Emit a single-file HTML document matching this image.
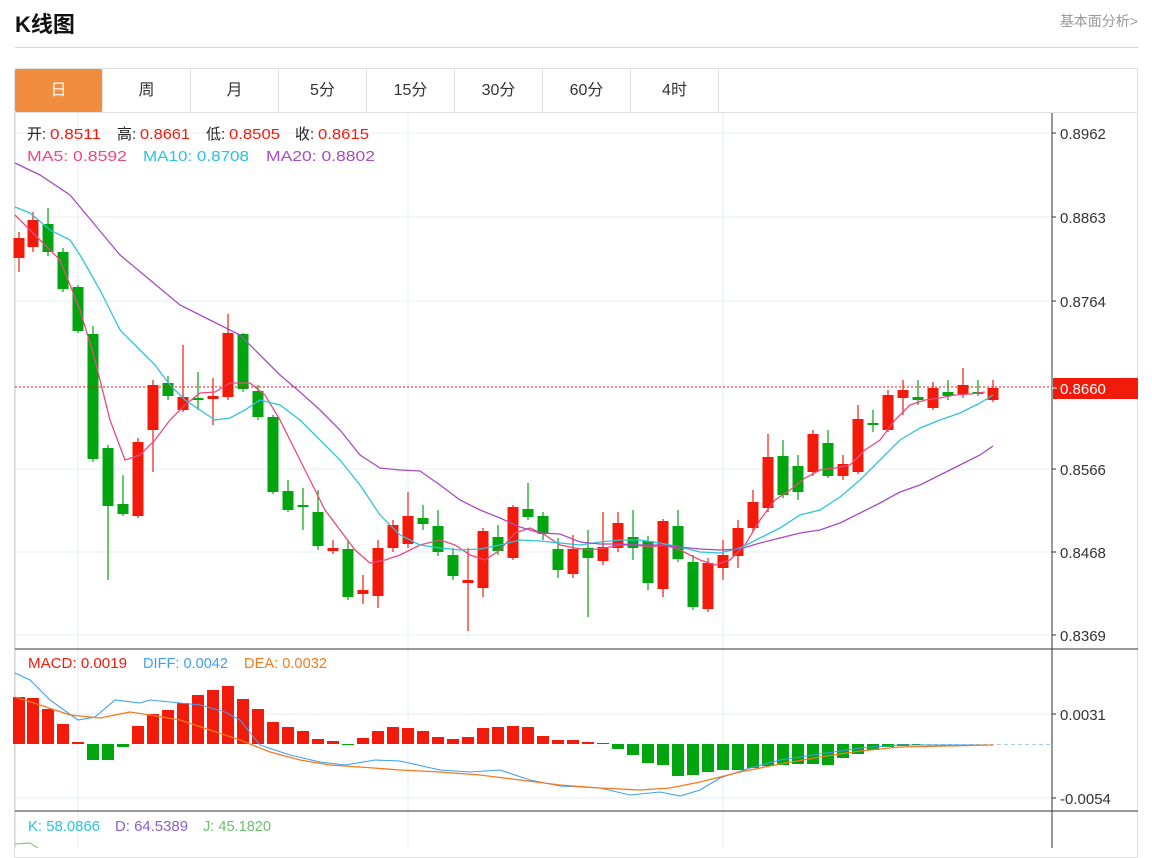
<!DOCTYPE html>
<html><head><meta charset="utf-8"><style>
body{margin:0;background:#fff;width:1152px;height:848px;overflow:hidden;font-family:"Liberation Sans","Noto Sans CJK SC",sans-serif;position:relative}
.t{position:absolute;left:15px;top:7px;font-size:22px;font-weight:bold;color:#111}
.lk{position:absolute;right:14px;top:11px;font-size:14px;color:#999}
.hr{position:absolute;left:15px;right:14px;top:47px;height:1px;background:#d5d5d5}
.frame{position:absolute;left:14px;top:68px;width:1124px;height:790px;border:1px solid #e0e0e0;box-sizing:border-box}
.tabs{position:absolute;left:15px;top:69px;height:43px;display:flex}
.tabs div{width:87px;height:43px;border-right:1px solid #e0e0e0;text-align:center;line-height:43px;font-size:16px;color:#333}
.tabs .a{background:#f28c3e;color:#fff;border-radius:2px}
.tb{position:absolute;left:15px;top:112px;width:1123px;height:1px;background:#e0e0e0}
svg{position:absolute;left:0;top:0}
</style></head><body>
<div class="t">K线图</div><div class="lk">基本面分析&gt;</div><div class="hr"></div>
<div class="frame"></div>
<div class="tabs"><div class="a">日</div><div>周</div><div>月</div><div>5分</div><div>15分</div><div>30分</div><div>60分</div><div>4时</div></div>
<div class="tb"></div>
<svg id="s" width="1152" height="848" xmlns="http://www.w3.org/2000/svg" font-family="Liberation Sans, Noto Sans CJK SC, sans-serif"></svg>
<script>
var s='';
function L(x1,y1,x2,y2,c,w,d){s+='<line x1="'+x1+'" y1="'+y1+'" x2="'+x2+'" y2="'+y2+'" stroke="'+c+'" stroke-width="'+(w||1)+'"'+(d?' stroke-dasharray="'+d+'"':'')+'/>';}
function T(x,y,t,c,sz,tl){s+='<text x="'+x+'" y="'+y+'" fill="'+c+'" font-size="'+(sz||14)+'"'+(tl?' textLength="'+tl+'" lengthAdjust="spacingAndGlyphs"':'')+'>'+t+'</text>';}
[133,217,301,385,469,552,635,714,798].forEach(function(y){L(15,y,1052,y,'#e6eef5');});
[78,408,723].forEach(function(x){L(x,113,x,848,'#e6eef5');});
L(15,113,15,848,'#ccc');L(1052,113,1052,848,'#333');
L(15,649,1138,649,'#333');L(15,811,1138,811,'#333');
var ax=[[133,'0.8962'],[217,'0.8863'],[301,'0.8764'],[469,'0.8566'],[552,'0.8468'],[635,'0.8369'],[714,'0.0031'],[798,'-0.0054']];
ax.forEach(function(a){L(1052,a[0],1056,a[0],'#333');T(1060,a[0]+6,a[1],'#333',15);});
var C=[[19,238,258,232,272,'r'],[33,220,247,212,252,'r'],[48,224,252,208,256,'g'],[63,252,289,248,292,'g'],[78,287,331,285,333,'g'],[93,334,459,326,462,'g'],[108,448,506,445,580,'g'],[123,504,514,475,516,'g'],[138,442,516,438,518,'r'],[153,385,430,380,472,'r'],[168,383,396,376,400,'g'],[183,397,410,345,412,'r'],[198,398,400,372,410,'g'],[213,396,399,378,425,'r'],[228,333,397,314,400,'r'],[243,334,389,333,392,'g'],[258,391,417,385,420,'g'],[273,417,492,415,494,'g'],[288,491,510,480,512,'g'],[303,505,507,488,530,'g'],[318,512,546,490,550,'g'],[333,548,551,540,554,'r'],[348,549,597,540,600,'g'],[363,590,594,575,604,'r'],[378,548,596,540,608,'r'],[393,525,548,520,552,'r'],[408,516,544,492,548,'r'],[423,518,524,505,530,'g'],[438,526,552,510,556,'g'],[453,555,576,548,580,'g'],[468,580,583,548,631,'r'],[483,531,588,528,597,'r'],[498,537,551,525,555,'g'],[513,507,558,505,560,'r'],[528,509,517,483,520,'g'],[543,516,534,512,540,'g'],[558,549,570,538,578,'g'],[573,549,574,535,578,'r'],[588,548,558,530,617,'g'],[603,547,561,512,565,'r'],[618,523,548,512,552,'r'],[633,537,548,510,560,'g'],[648,541,583,536,590,'g'],[663,521,589,519,597,'r'],[678,526,559,510,562,'g'],[693,562,607,555,610,'g'],[708,563,609,558,612,'r'],[723,555,568,540,580,'r'],[738,528,556,520,568,'r'],[753,502,528,490,532,'r'],[768,457,508,434,512,'r'],[783,456,495,440,498,'g'],[798,466,492,455,500,'g'],[813,434,472,430,476,'r'],[828,443,476,430,478,'g'],[843,464,476,455,480,'r'],[858,419,472,405,474,'r'],[873,423,425,410,432,'g'],[888,395,430,390,432,'r'],[903,390,398,380,415,'r'],[918,397,400,380,405,'g'],[933,388,408,382,410,'r'],[948,392,396,380,400,'g'],[963,385,394,368,398,'r'],[978,392,394,380,396,'g'],[993,388,400,380,402,'r']];
C.forEach(function(c){var col=c[5]=='r'?'#f21a0a':'#00a50f';L(c[0],c[3],c[0],c[4],col,1.2);s+='<rect x="'+(c[0]-5.5)+'" y="'+c[1]+'" width="11" height="'+Math.max(2,c[2]-c[1])+'" fill="'+col+'"/>';});
function P(pts,c,w){s+='<polyline fill="none" stroke="'+c+'" stroke-width="'+(w||1.3)+'" points="'+pts+'"/>';}
P('15,215 30,230 60,260 80,310 95,360 110,420 125,460 140,455 155,440 170,420 185,405 200,393 215,392 230,383 250,383 265,395 280,420 295,450 310,480 325,510 340,530 355,550 370,563 385,560 400,555 420,545 440,540 455,545 470,555 485,560 500,550 515,533 530,528 545,535 560,545 575,548 590,550 605,548 620,545 635,545 650,547 665,545 680,550 700,560 715,565 730,560 745,545 760,520 775,500 790,490 805,478 820,470 835,468 850,465 865,450 880,440 895,420 910,405 925,400 940,398 955,395 970,394 985,392','#ea4a7d');
P('15,207 30,213 50,230 70,240 80,255 100,290 120,330 140,350 155,365 170,385 185,400 200,410 215,420 230,418 245,410 260,400 280,405 300,420 320,440 340,460 360,485 380,515 400,535 420,545 440,548 460,550 480,549 500,545 520,540 540,541 560,543 580,545 600,542 620,540 640,540 660,543 680,547 700,552 720,553 740,548 760,538 780,528 800,515 820,510 840,497 860,480 880,460 900,440 920,428 940,420 960,413 980,403 993,395','#2cc4dc');
P('15,163 40,175 70,195 95,225 120,255 150,280 180,305 210,320 240,335 260,355 280,375 300,392 320,410 340,430 360,455 380,468 400,470 420,471 440,485 460,500 480,510 500,518 520,527 540,533 560,534 580,542 600,544 620,544 640,545 660,545 680,547 700,549 720,550 740,549 760,543 780,538 800,533 820,530 840,523 860,513 880,503 900,492 920,485 940,475 960,465 980,455 993,446','#a64cc0');
L(15,387,1052,387,'#f21a0a',1,'2,2');
s+='<rect x="1053" y="378" width="85" height="21" fill="#f21a0a"/>';L(1052,388,1057,388,'#fff');T(1060,394,'0.8660','#fff',15);
var M=[[19,697],[33,698],[48,709],[63,724],[78,742],[93,760],[108,760],[123,747],[138,726],[153,714],[168,710],[183,703],[198,695],[213,690],[228,686],[243,699],[258,709],[273,722],[288,727],[303,731],[318,739],[333,741],[348,745],[363,738],[378,731],[393,727],[408,728],[423,731],[438,737],[453,739],[468,737],[483,728],[498,727],[513,726],[528,727],[543,736],[558,740],[573,740],[588,742],[603,743],[618,749],[633,755],[648,763],[663,765],[678,776],[693,775],[708,772],[723,770],[738,770],[753,768],[768,766],[783,765],[798,764],[813,764],[828,765],[843,758],[858,754],[873,750],[888,747],[903,746],[918,745]];
M.forEach(function(m){var y=m[1],z=744;if(y<z)s+='<rect x="'+(m[0]-6)+'" y="'+y+'" width="12" height="'+(z-y)+'" fill="#f21a0a"/>';else s+='<rect x="'+(m[0]-6)+'" y="'+z+'" width="12" height="'+Math.max(1,y-z)+'" fill="#00a50f"/>';});
L(920,744.5,1052,744.5,'#9fd4e0',1,'4,3');
P('15,673 30,680 50,700 78,720 95,717 115,700 140,703 150,700 170,702 200,705 225,712 240,720 260,745 290,755 320,762 345,765 375,760 400,761 440,770 470,772 500,770 530,780 560,786 600,788 630,795 660,792 680,796 700,790 720,778 750,768 780,760 820,754 860,748 900,745 993,745','#3fa0f0',1.1);
P('15,697 40,705 70,715 100,718 130,712 150,715 180,720 210,730 240,740 270,752 300,760 330,765 360,767 400,770 440,772 480,775 520,780 560,785 600,788 640,790 670,788 700,782 740,772 780,764 820,757 860,751 900,747 993,745','#f37a20',1.3);
P('15,844 30,843 38,848','#6cbf6c',1);
T(27,139,'开:','#222',15);T(50,139,'0.8511','#f21a0a',15,51);T(117,139,'高:','#222',15);T(140,139,'0.8661','#f21a0a',15,50);T(206,139,'低:','#222',15);T(229,139,'0.8505','#f21a0a',15,51);T(295,139,'收:','#222',15);T(318,139,'0.8615','#f21a0a',15,51);
T(27,161,'MA5: 0.8592','#ea4a7d',15,100);T(143,161,'MA10: 0.8708','#2cc4dc',15,106);T(266,161,'MA20: 0.8802','#a64cc0',15,109);
T(28,668,'MACD: 0.0019','#f21a0a',15,99);T(143,668,'DIFF: 0.0042','#3fa0f0',15,85);T(244,668,'DEA: 0.0032','#f37a20',15,83);
T(28,831,'K: 58.0866','#2cc4dc',15,72);T(115,831,'D: 64.5389','#8a5fc9',15,73);T(203,831,'J: 45.1820','#6cbf6c',15,68);
document.getElementById('s').innerHTML=s;
</script>
</body></html>
